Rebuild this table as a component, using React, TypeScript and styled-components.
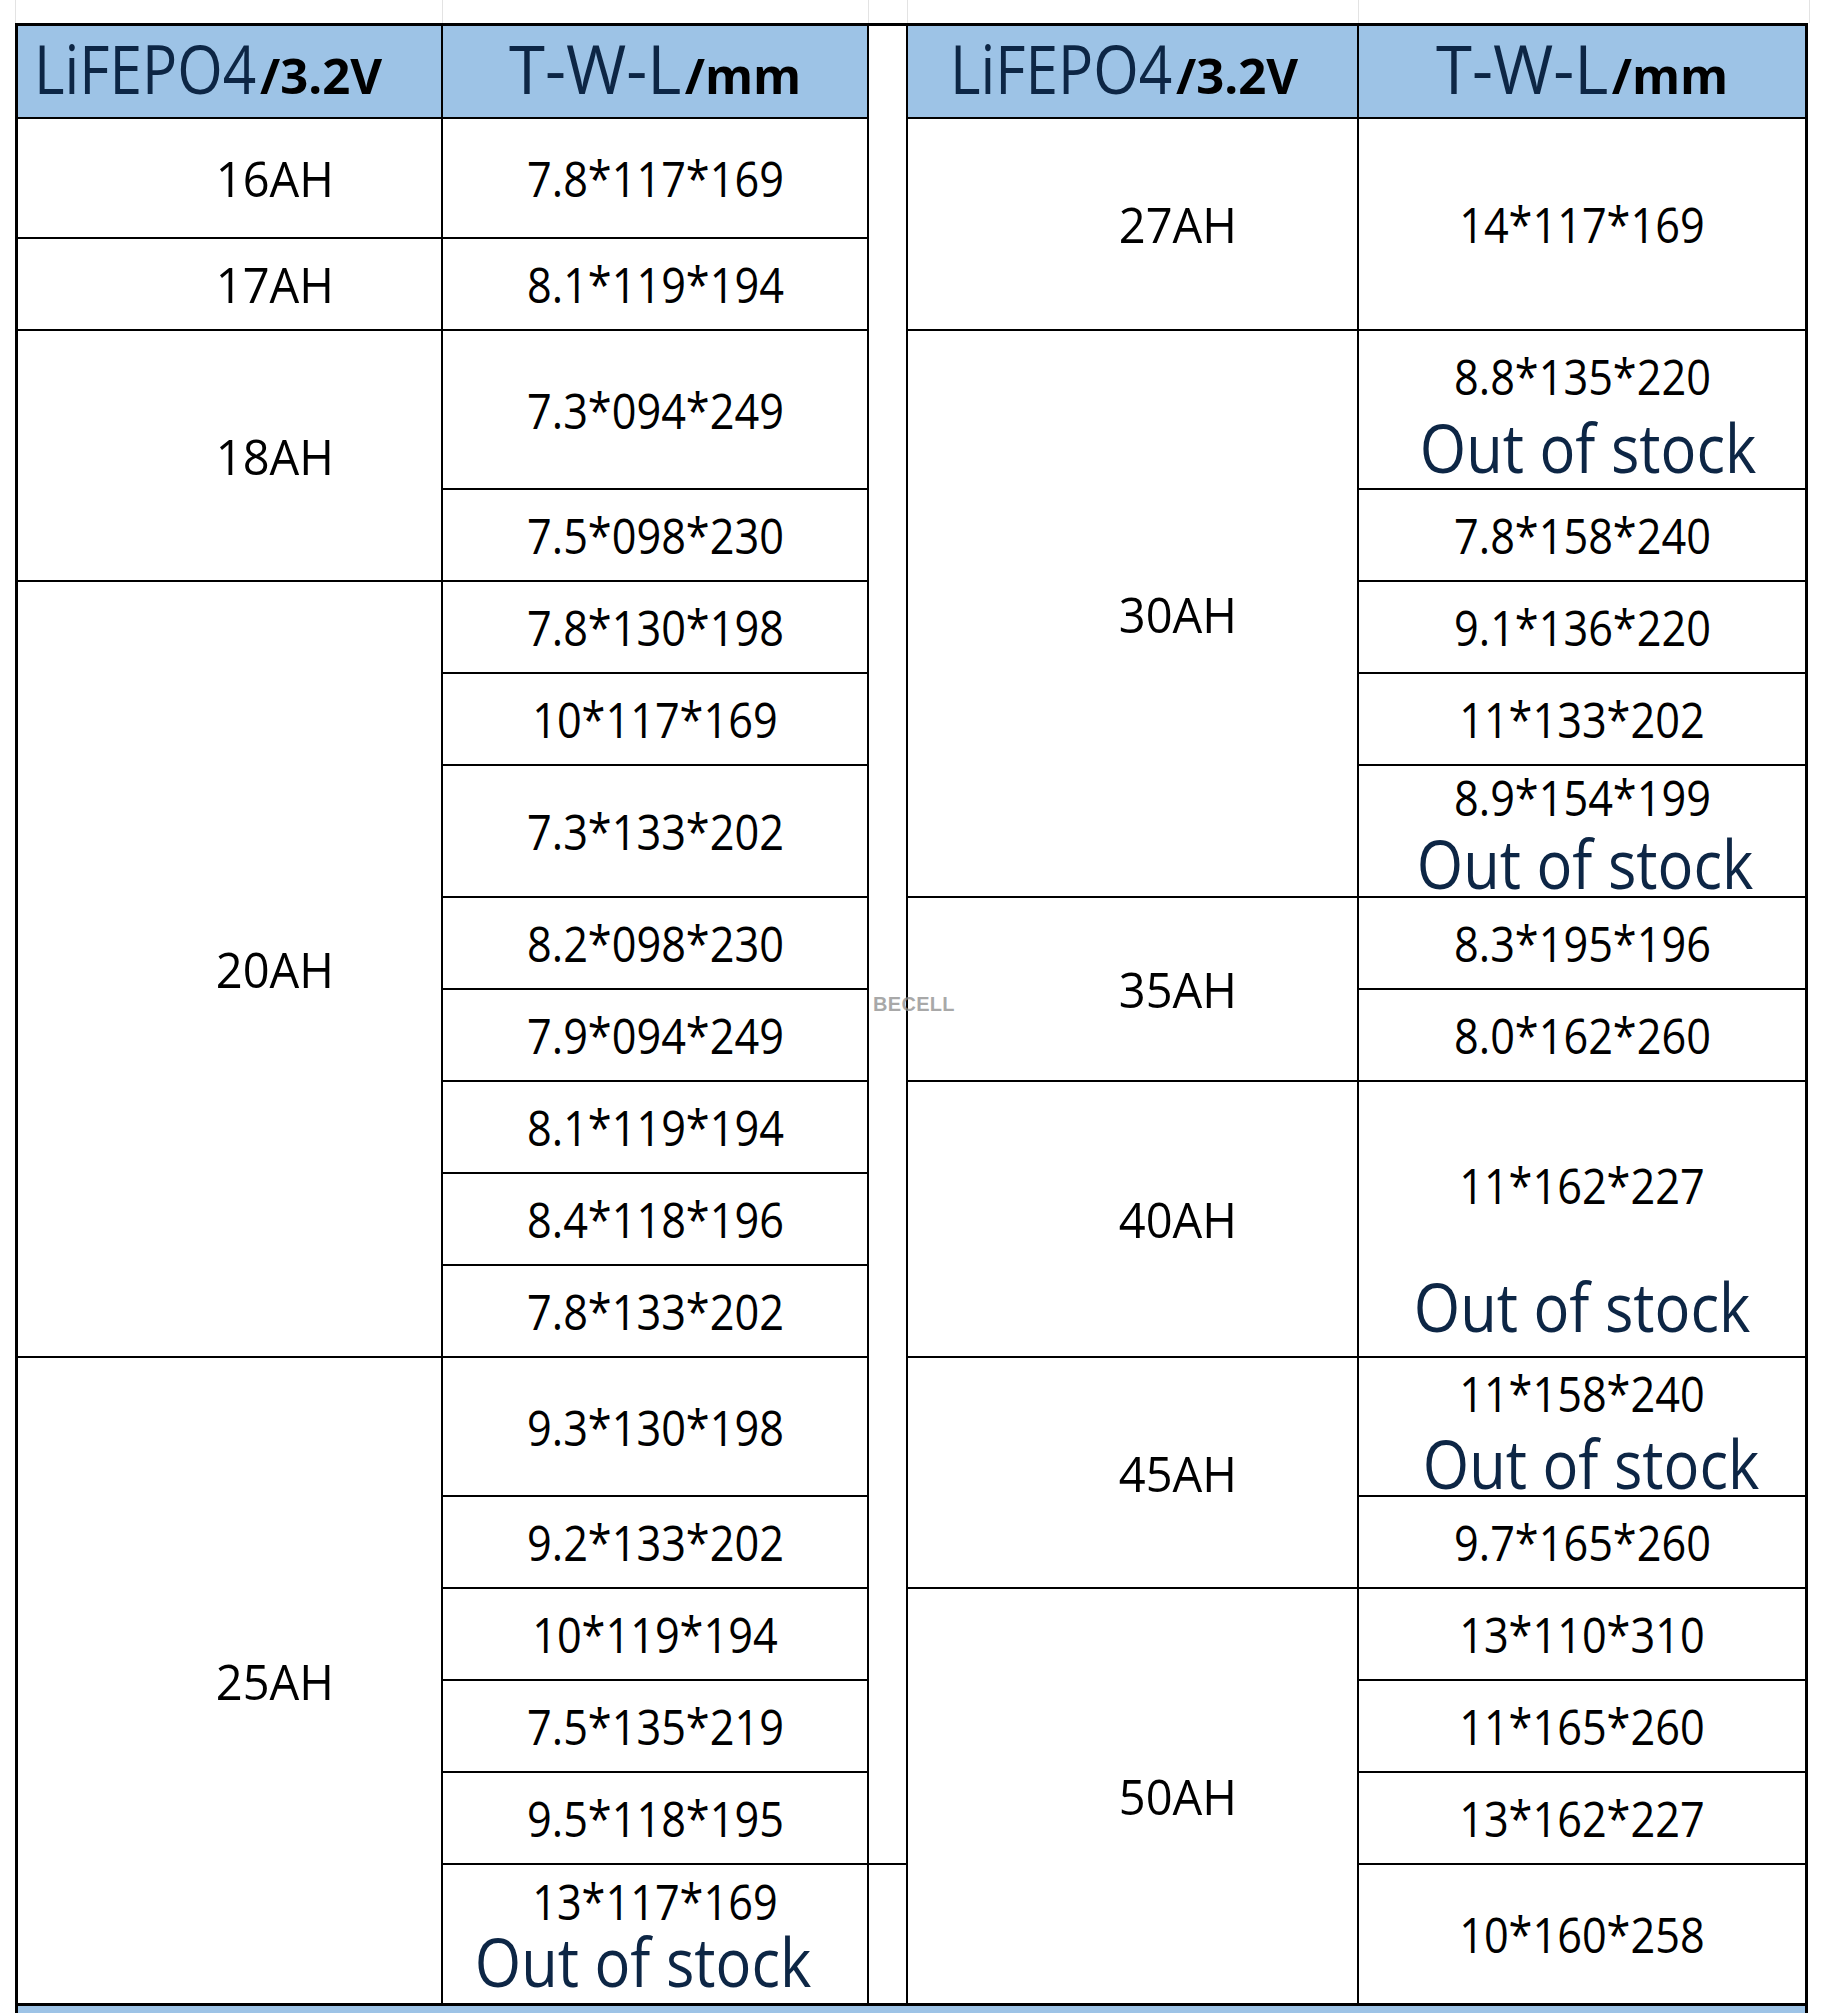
import React from "react";
import styled, { createGlobalStyle } from "styled-components";

const GlobalStyle = createGlobalStyle`
  html, body { margin: 0; padding: 0; background: #ffffff; }
  body { font-family: "Open Sans", "Noto Sans", sans-serif; }
`;

const HEADER_BG = "#9dc3e6";
const NAVY = "#0d2645";

const Page = styled.div`
  position: relative;
  width: 1824px;
  height: 2013px;
  overflow: hidden;
  background: #ffffff;
`;

const RulerStrip = styled.div`
  display: flex;
  height: 23px;
  padding-left: 15px;
`;

const RulerCell = styled.div<{ $w: number; $last?: boolean }>`
  box-sizing: border-box;
  width: ${(p) => p.$w}px;
  height: 100%;
  border-left: 1px solid #e3e3e3;
  border-right: ${(p) => (p.$last ? "1px solid #e3e3e3" : "none")};
`;

const Sheet = styled.div`
  box-sizing: border-box;
  margin-left: 15px;
  width: 1793px;
  border: 3px solid #000;
  border-bottom: none;
`;

const Grid = styled.div`
  display: grid;
  grid-template-columns: 423px 424px 37px 449px 446px;
  grid-template-rows: 91px 118px 90px 157px 90px 90px 90px 130px 90px 90px 90px 90px 90px 137px 90px 90px 90px 90px 138px;
  gap: 2px;
  background: #000;
`;

const Cell = styled.div<{ $col: number; $row: number; $span?: number }>`
  grid-column: ${(p) => p.$col};
  grid-row: ${(p) => p.$row} / span ${(p) => p.$span ?? 1};
  background: #ffffff;
  display: flex;
  flex-direction: column;
  align-items: center;
  justify-content: center;
  min-width: 0;
  overflow: visible;
`;

const CapacityCell = styled(Cell)`
  padding-left: 91px;
`;

const StackCell = styled(Cell)<{ $padTop: number }>`
  justify-content: flex-start;
  padding-top: ${(p) => p.$padTop}px;
  box-sizing: border-box;
`;

const HeaderCell = styled(Cell)<{ $align: "left" | "center"; $padLeft?: number }>`
  background: ${HEADER_BG};
  flex-direction: row;
  align-items: center;
  justify-content: ${(p) => (p.$align === "left" ? "flex-start" : "center")};
  padding-left: ${(p) => p.$padLeft ?? 0}px;
  padding-bottom: 8px;
  box-sizing: border-box;
`;

const HeaderGroup = styled.div`
  display: flex;
  align-items: baseline;
  white-space: nowrap;
`;

const HeadMain = styled.span<{ $box: number; $sx: number }>`
  display: inline-block;
  width: ${(p) => p.$box}px;
  font-size: 68px;
  line-height: 68px;
  font-weight: 400;
  color: ${NAVY};
  transform: scaleX(${(p) => p.$sx});
  transform-origin: left center;
  white-space: nowrap;
`;

const HeadUnit = styled.span`
  display: inline-block;
  font-size: 49px;
  line-height: 49px;
  font-weight: 700;
  color: #000;
  white-space: nowrap;
`;

const Spec = styled.span`
  display: inline-block;
  font-size: 50px;
  line-height: 50px;
  color: #000;
  white-space: nowrap;
  transform: scaleX(0.865);
`;

const Capacity = styled(Spec)`
  transform: scaleX(0.94);
`;

const Stock = styled.span<{ $lift: number; $shift: number }>`
  display: inline-block;
  margin-top: ${(p) => p.$lift}px;
  font-size: 67px;
  line-height: 70px;
  color: ${NAVY};
  white-space: nowrap;
  transform: translateX(${(p) => p.$shift}px) scaleX(0.89);
`;

const NextHeader = styled.div`
  border-top: 3px solid #000;
  height: 7px;
  background: ${HEADER_BG};
`;

const Mark = styled.span`
  position: absolute;
  left: 873px;
  top: 993px;
  font-family: "Liberation Sans", Arial, sans-serif;
  font-weight: 700;
  font-size: 20px;
  letter-spacing: 0.3px;
  color: rgba(140, 140, 140, 0.75);
  pointer-events: none;
`;

type Entry =
  | { kind: "cap"; col: number; row: number; span?: number; text: string }
  | { kind: "spec"; col: number; row: number; span?: number; text: string }
  | { kind: "stock"; col: number; row: number; span?: number; text: string; pad: number; lift: number; shift: number }
  | { kind: "blank"; col: number; row: number; span?: number };

const entries: Entry[] = [
  // left table – capacity column
  { kind: "cap", col: 1, row: 2, text: "16AH" },
  { kind: "cap", col: 1, row: 3, text: "17AH" },
  { kind: "cap", col: 1, row: 4, span: 2, text: "18AH" },
  { kind: "cap", col: 1, row: 6, span: 8, text: "20AH" },
  { kind: "cap", col: 1, row: 14, span: 6, text: "25AH" },
  // left table – size column
  { kind: "spec", col: 2, row: 2, text: "7.8*117*169" },
  { kind: "spec", col: 2, row: 3, text: "8.1*119*194" },
  { kind: "spec", col: 2, row: 4, text: "7.3*094*249" },
  { kind: "spec", col: 2, row: 5, text: "7.5*098*230" },
  { kind: "spec", col: 2, row: 6, text: "7.8*130*198" },
  { kind: "spec", col: 2, row: 7, text: "10*117*169" },
  { kind: "spec", col: 2, row: 8, text: "7.3*133*202" },
  { kind: "spec", col: 2, row: 9, text: "8.2*098*230" },
  { kind: "spec", col: 2, row: 10, text: "7.9*094*249" },
  { kind: "spec", col: 2, row: 11, text: "8.1*119*194" },
  { kind: "spec", col: 2, row: 12, text: "8.4*118*196" },
  { kind: "spec", col: 2, row: 13, text: "7.8*133*202" },
  { kind: "spec", col: 2, row: 14, text: "9.3*130*198" },
  { kind: "spec", col: 2, row: 15, text: "9.2*133*202" },
  { kind: "spec", col: 2, row: 16, text: "10*119*194" },
  { kind: "spec", col: 2, row: 17, text: "7.5*135*219" },
  { kind: "spec", col: 2, row: 18, text: "9.5*118*195" },
  { kind: "stock", col: 2, row: 19, text: "13*117*169", pad: 11, lift: 0, shift: -12 },
  // spacer column
  { kind: "blank", col: 3, row: 1, span: 18 },
  { kind: "blank", col: 3, row: 19 },
  // right table – capacity column
  { kind: "cap", col: 4, row: 2, span: 2, text: "27AH" },
  { kind: "cap", col: 4, row: 4, span: 5, text: "30AH" },
  { kind: "cap", col: 4, row: 9, span: 2, text: "35AH" },
  { kind: "cap", col: 4, row: 11, span: 3, text: "40AH" },
  { kind: "cap", col: 4, row: 14, span: 2, text: "45AH" },
  { kind: "cap", col: 4, row: 16, span: 4, text: "50AH" },
  // right table – size column
  { kind: "spec", col: 5, row: 2, span: 2, text: "14*117*169" },
  { kind: "stock", col: 5, row: 4, text: "8.8*135*220", pad: 20, lift: 11, shift: 6 },
  { kind: "spec", col: 5, row: 5, text: "7.8*158*240" },
  { kind: "spec", col: 5, row: 6, text: "9.1*136*220" },
  { kind: "spec", col: 5, row: 7, text: "11*133*202" },
  { kind: "stock", col: 5, row: 8, text: "8.9*154*199", pad: 6, lift: 6, shift: 3 },
  { kind: "spec", col: 5, row: 9, text: "8.3*195*196" },
  { kind: "spec", col: 5, row: 10, text: "8.0*162*260" },
  { kind: "stock", col: 5, row: 11, span: 3, text: "11*162*227", pad: 78, lift: 61, shift: 0 },
  { kind: "stock", col: 5, row: 14, text: "11*158*240", pad: 10, lift: 10, shift: 9 },
  { kind: "spec", col: 5, row: 15, text: "9.7*165*260" },
  { kind: "spec", col: 5, row: 16, text: "13*110*310" },
  { kind: "spec", col: 5, row: 17, text: "11*165*260" },
  { kind: "spec", col: 5, row: 18, text: "13*162*227" },
  { kind: "spec", col: 5, row: 19, text: "10*160*258" },
];

function renderEntry(e: Entry, i: number) {
  switch (e.kind) {
    case "cap":
      return (
        <CapacityCell key={i} $col={e.col} $row={e.row} $span={e.span}>
          <Capacity>{e.text}</Capacity>
        </CapacityCell>
      );
    case "spec":
      return (
        <Cell key={i} $col={e.col} $row={e.row} $span={e.span}>
          <Spec>{e.text}</Spec>
        </Cell>
      );
    case "stock":
      return (
        <StackCell key={i} $col={e.col} $row={e.row} $span={e.span} $padTop={e.pad}>
          <Spec>{e.text}</Spec>
          <Stock $lift={e.lift} $shift={e.shift}>Out of stock</Stock>
        </StackCell>
      );
    default:
      return <Cell key={i} $col={e.col} $row={e.row} $span={e.span} />;
  }
}

function ChemHeader() {
  return (
    <HeaderGroup>
      <HeadMain $box={226} $sx={0.86}>LiFEPO4</HeadMain>
      <HeadUnit>/3.2V</HeadUnit>
    </HeaderGroup>
  );
}

function SizeHeader() {
  return (
    <HeaderGroup>
      <HeadMain $box={176} $sx={0.96}>T-W-L</HeadMain>
      <HeadUnit>/mm</HeadUnit>
    </HeaderGroup>
  );
}

export default function App() {
  return (
    <Page>
      <GlobalStyle />
      <RulerStrip>
        <RulerCell $w={427} />
        <RulerCell $w={426} />
        <RulerCell $w={39} />
        <RulerCell $w={451} />
        <RulerCell $w={452} $last />
      </RulerStrip>
      <Sheet>
        <Grid>
          <HeaderCell $col={1} $row={1} $align="left" $padLeft={16}>
            <ChemHeader />
          </HeaderCell>
          <HeaderCell $col={2} $row={1} $align="center">
            <SizeHeader />
          </HeaderCell>
          <HeaderCell $col={4} $row={1} $align="left" $padLeft={42}>
            <ChemHeader />
          </HeaderCell>
          <HeaderCell $col={5} $row={1} $align="center">
            <SizeHeader />
          </HeaderCell>
          {entries.map(renderEntry)}
        </Grid>
        <NextHeader />
      </Sheet>
      <Mark>BECELL</Mark>
    </Page>
  );
}
